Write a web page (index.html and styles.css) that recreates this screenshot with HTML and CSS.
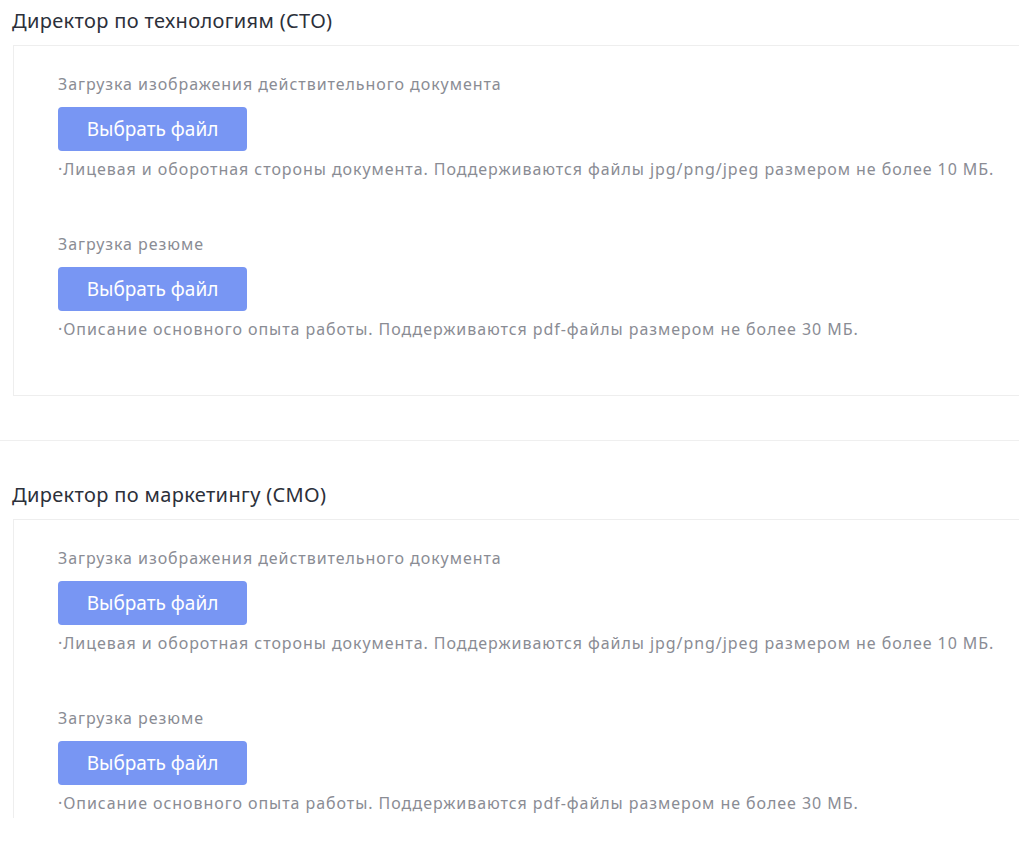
FILE: index.html
```html
<!DOCTYPE html>
<html lang="ru">
<head>
    <meta charset="UTF-8">
    <meta name="viewport" content="width=device-width, initial-scale=1.0">
    <title>Загрузка документов</title>
    <link rel="stylesheet" href="styles.css">
</head>
<body>
    <div class="page">
        <div class="section">
            <h3 class="section-title">Директор по технологиям (CTO)</h3>
            <div class="card">
                <div class="field">
                    <div class="field-label">Загрузка изображения действительного документа</div>
                    <button class="upload-btn">Выбрать файл</button>
                    <div class="field-hint">·Лицевая и оборотная стороны документа. Поддерживаются файлы jpg/png/jpeg размером не более 10 МБ.</div>
                </div>
                <div class="field">
                    <div class="field-label">Загрузка резюме</div>
                    <button class="upload-btn">Выбрать файл</button>
                    <div class="field-hint">·Описание основного опыта работы. Поддерживаются pdf-файлы размером не более 30 МБ.</div>
                </div>
            </div>
        </div>

        <div class="divider"></div>

        <div class="section">
            <h3 class="section-title">Директор по маркетингу (CMO)</h3>
            <div class="card">
                <div class="field">
                    <div class="field-label">Загрузка изображения действительного документа</div>
                    <button class="upload-btn">Выбрать файл</button>
                    <div class="field-hint">·Лицевая и оборотная стороны документа. Поддерживаются файлы jpg/png/jpeg размером не более 10 МБ.</div>
                </div>
                <div class="field">
                    <div class="field-label">Загрузка резюме</div>
                    <button class="upload-btn">Выбрать файл</button>
                    <div class="field-hint">·Описание основного опыта работы. Поддерживаются pdf-файлы размером не более 30 МБ.</div>
                </div>
            </div>
        </div>
    </div>
</body>
</html>
```

FILE: styles.css
```css
body {
    margin: 0;
    font-family: "Noto Sans", "Open Sans", Arial, sans-serif;
    background: #fff;
}
.page {
    height: 818px;
    overflow: hidden;
}
.section-title {
    margin: 0;
    padding: 0 12px;
    font-size: 20px;
    line-height: 42px;
    font-weight: normal;
    letter-spacing: 0.35px;
    color: #2c303a;
}
.card {
    margin: 3px 0 0 13px;
    padding: 28px 44px 56px;
    border: 1px solid #eeeeee;
    border-right: none;
}
.field + .field {
    margin-top: 55px;
}
.field-label,
.field-hint {
    font-size: 16px;
    line-height: 20px;
    letter-spacing: 0.94px;
    color: #8a8c94;
    white-space: nowrap;
}
.upload-btn {
    display: block;
    margin-top: 13px;
    width: 189px;
    height: 44px;
    background-color: #7896f3;
    color: #fff;
    border: none;
    border-radius: 4px;
    font-family: inherit;
    font-size: 19px;
    cursor: pointer;
}
.field-hint {
    margin-top: 8px;
}
.divider {
    margin: 44px 0 33px;
    border-top: 1px solid #efefef;
}
```
